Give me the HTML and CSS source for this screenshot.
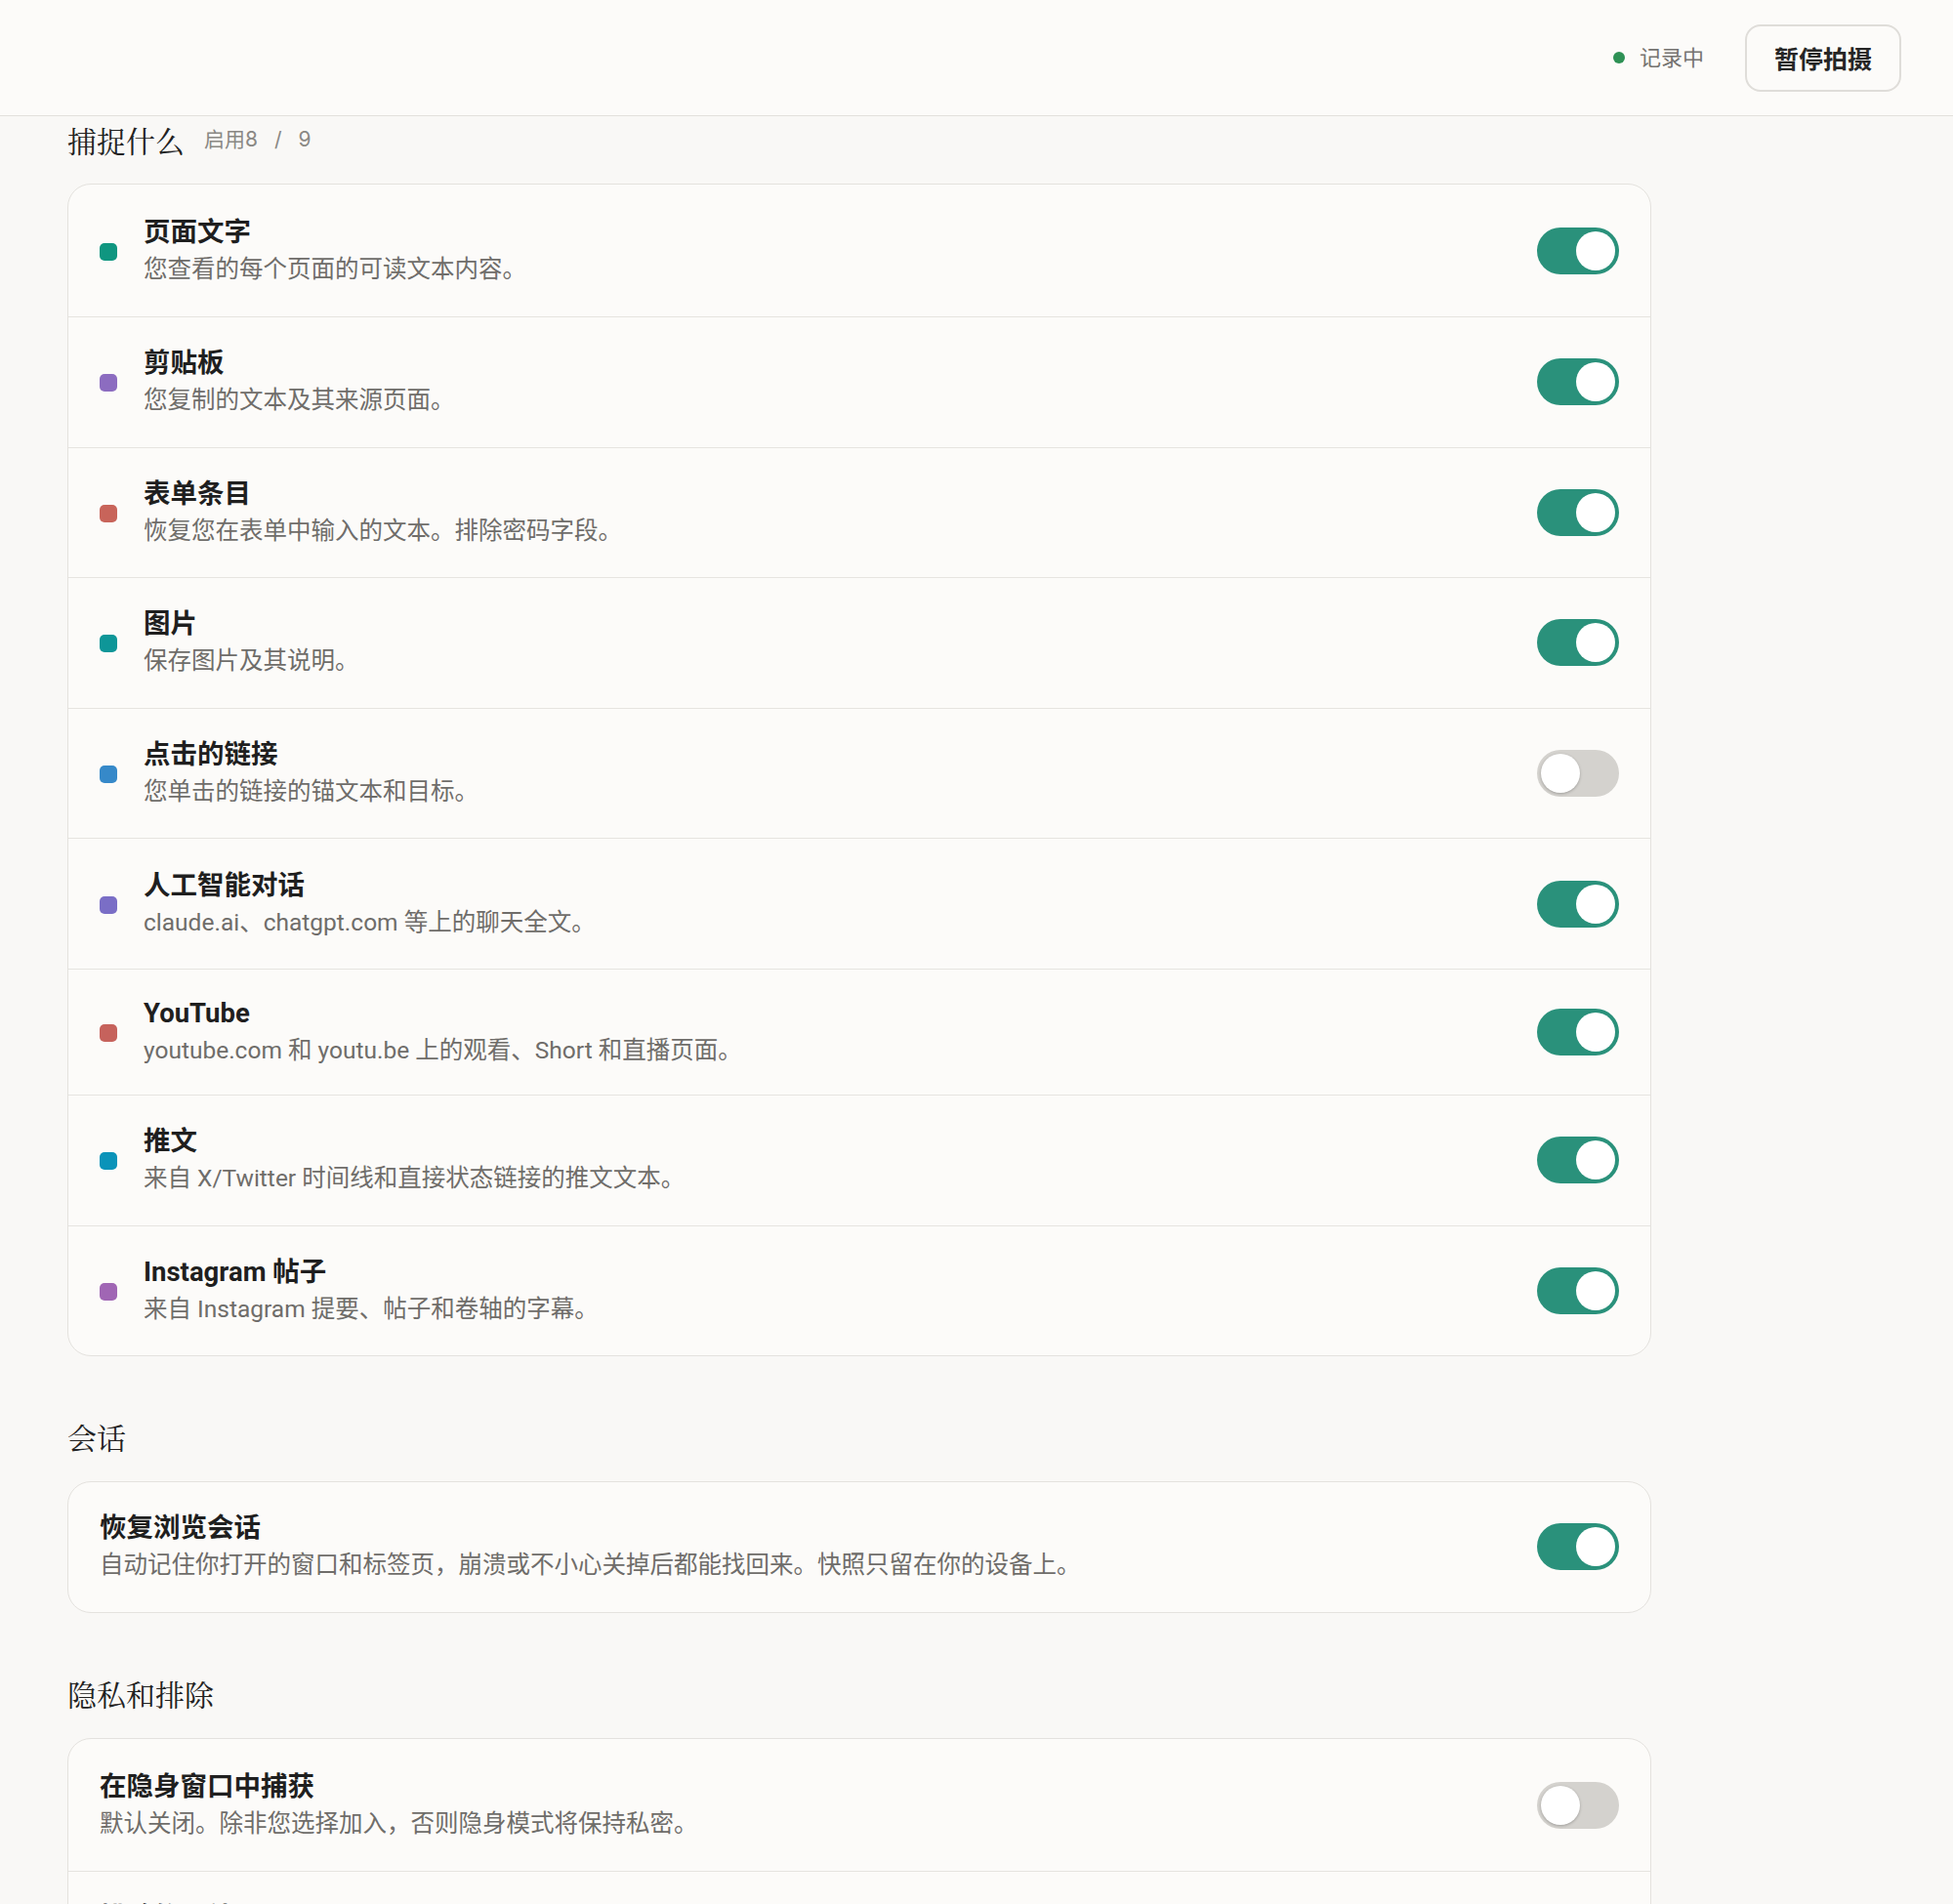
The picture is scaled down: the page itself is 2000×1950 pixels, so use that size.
FILE: index.html
```html
<!DOCTYPE html>
<html lang="zh-CN">
<head>
<meta charset="utf-8">
<title>设置</title>
<link rel="stylesheet" href="styles.css">
</head>
<body>
<header class="topbar">
  <div class="status"><span class="status-dot"></span><span class="status-text">记录中</span></div>
  <button class="pause-btn">暂停拍摄</button>
</header>
<main class="main">
  <section class="section first">
    <h2 class="section-title">捕捉什么<span class="count">启用8<span class="slash">/</span>9</span></h2>
    <div class="card">
      <div class="row">
        <span class="dot c1"></span>
        <div class="text"><div class="title">页面文字</div><div class="desc">您查看的每个页面的可读文本内容。</div></div>
        <span class="toggle on"><span class="knob"></span></span>
      </div>
      <div class="row">
        <span class="dot c2"></span>
        <div class="text"><div class="title">剪贴板</div><div class="desc">您复制的文本及其来源页面。</div></div>
        <span class="toggle on"><span class="knob"></span></span>
      </div>
      <div class="row">
        <span class="dot c3"></span>
        <div class="text"><div class="title">表单条目</div><div class="desc">恢复您在表单中输入的文本。排除密码字段。</div></div>
        <span class="toggle on"><span class="knob"></span></span>
      </div>
      <div class="row">
        <span class="dot c4"></span>
        <div class="text"><div class="title">图片</div><div class="desc">保存图片及其说明。</div></div>
        <span class="toggle on"><span class="knob"></span></span>
      </div>
      <div class="row">
        <span class="dot c5"></span>
        <div class="text"><div class="title">点击的链接</div><div class="desc">您单击的链接的锚文本和目标。</div></div>
        <span class="toggle"><span class="knob"></span></span>
      </div>
      <div class="row">
        <span class="dot c6"></span>
        <div class="text"><div class="title">人工智能对话</div><div class="desc">claude.ai、chatgpt.com 等上的聊天全文。</div></div>
        <span class="toggle on"><span class="knob"></span></span>
      </div>
      <div class="row short">
        <span class="dot c7"></span>
        <div class="text"><div class="title">YouTube</div><div class="desc">youtube.com 和 youtu.be 上的观看、Short 和直播页面。</div></div>
        <span class="toggle on"><span class="knob"></span></span>
      </div>
      <div class="row">
        <span class="dot c8"></span>
        <div class="text"><div class="title">推文</div><div class="desc">来自 X/Twitter 时间线和直接状态链接的推文文本。</div></div>
        <span class="toggle on"><span class="knob"></span></span>
      </div>
      <div class="row">
        <span class="dot c9"></span>
        <div class="text"><div class="title">Instagram 帖子</div><div class="desc">来自 Instagram 提要、帖子和卷轴的字幕。</div></div>
        <span class="toggle on"><span class="knob"></span></span>
      </div>
    </div>
  </section>

  <section class="section">
    <h2 class="section-title">会话</h2>
    <div class="card">
      <div class="row">
        <div class="text"><div class="title">恢复浏览会话</div><div class="desc">自动记住你打开的窗口和标签页，崩溃或不小心关掉后都能找回来。快照只留在你的设备上。</div></div>
        <span class="toggle on"><span class="knob"></span></span>
      </div>
    </div>
  </section>

  <section class="section">
    <h2 class="section-title">隐私和排除</h2>
    <div class="card">
      <div class="row">
        <div class="text"><div class="title">在隐身窗口中捕获</div><div class="desc">默认关闭。除非您选择加入，否则隐身模式将保持私密。</div></div>
        <span class="toggle"><span class="knob"></span></span>
      </div>
      <div class="row">
        <div class="text"><div class="title">排除的网站</div><div class="desc">这些网站上的任何内容都不会被捕获。</div></div>
        <span class="toggle on"><span class="knob"></span></span>
      </div>
    </div>
  </section>
</main>
</body>
</html>
```

FILE: styles.css
```css
* { box-sizing: border-box; }

html, body {
  margin: 0;
  padding: 0;
  background: #f9f8f6;
  font-family: Inter, "Noto Sans CJK SC", sans-serif;
  color: #1f1f1f;
}

.topbar {
  height: 119px;
  background: #fcfbf9;
  border-bottom: 1px solid #e2e0dc;
  display: flex;
  align-items: center;
  justify-content: flex-end;
  padding: 0 53px 0 0;
  gap: 42px;
}

.status {
  display: flex;
  align-items: center;
  gap: 15px;
}

.status-dot {
  width: 12px;
  height: 12px;
  border-radius: 50%;
  background: #2e9155;
}

.status-text {
  font-size: 22px;
  color: #757370;
  line-height: 30px;
}

.pause-btn {
  width: 160px;
  height: 69px;
  border: 2px solid #dfddd9;
  border-radius: 16px;
  background: #fcfbf9;
  font-family: Inter, "Noto Sans CJK SC", sans-serif;
  font-size: 25px;
  font-weight: 700;
  color: #262626;
  padding: 0;
}

.main {
  padding: 4px 69px 0 69px;
}

.section {
  width: 1622px;
  margin-top: 62px;
}

.section.first {
  margin-top: 0;
}

.section-title {
  margin: 0 0 26px 0;
  height: 40px;
  display: flex;
  align-items: center;
  font-family: "Noto Serif CJK SC", "Noto Sans CJK SC", serif;
  font-size: 30px;
  font-weight: 400;
  color: #222;
  line-height: 40px;
}

.section.first .section-title {
  margin-bottom: 25px;
}

.count {
  margin-left: 20px;
  font-family: Inter, "Noto Sans CJK SC", sans-serif;
  font-size: 21px;
  color: #8a8884;
  display: flex;
  align-items: center;
}

.slash {
  margin: 0 17px;
}

.card {
  background: #fcfbf9;
  border: 1px solid #e4e2de;
  border-radius: 24px;
  overflow: hidden;
}

.row {
  display: flex;
  align-items: center;
  gap: 27px;
  padding: 29.3px 32px;
  border-top: 1px solid #e6e4e0;
}

.row:first-child {
  border-top: none;
}

.row:first-child:not(:only-child) {
  padding: 31px 32px 30px 32px;
}

.row.short {
  padding: 27px 32px;
}

.dot {
  width: 18px;
  height: 18px;
  border-radius: 5px;
  flex: none;
  margin-top: 2px;
}

.c1 { background: #0f9680; }
.c2 { background: #8c6cc0; }
.c3 { background: #c8645a; }
.c4 { background: #0e9698; }
.c5 { background: #3689c9; }
.c6 { background: #7a6ec6; }
.c7 { background: #c6625c; }
.c8 { background: #0a93b9; }
.c9 { background: #a066b4; }

.text {
  flex: 1;
  min-width: 0;
}

.title {
  font-size: 27.5px;
  font-weight: 700;
  line-height: 36px;
  color: #1f1f1f;
}

.desc {
  margin-top: 2px;
  font-size: 24.5px;
  line-height: 36px;
  color: #6f6d6a;
}

.title, .desc {
  font-family: Roboto, "Noto Sans CJK SC", sans-serif;
}

.toggle {
  flex: none;
  width: 84px;
  height: 48px;
  border-radius: 24px;
  background: #d4d2ce;
  padding: 4px;
  display: flex;
  justify-content: flex-start;
}

.toggle .knob {
  width: 40px;
  height: 40px;
  border-radius: 50%;
  background: #ffffff;
  box-shadow: 0 1px 3px rgba(0, 0, 0, 0.25);
}

.toggle.on {
  background: #2a917b;
  justify-content: flex-end;
}

.toggle.on .knob {
  box-shadow: none;
}
```
